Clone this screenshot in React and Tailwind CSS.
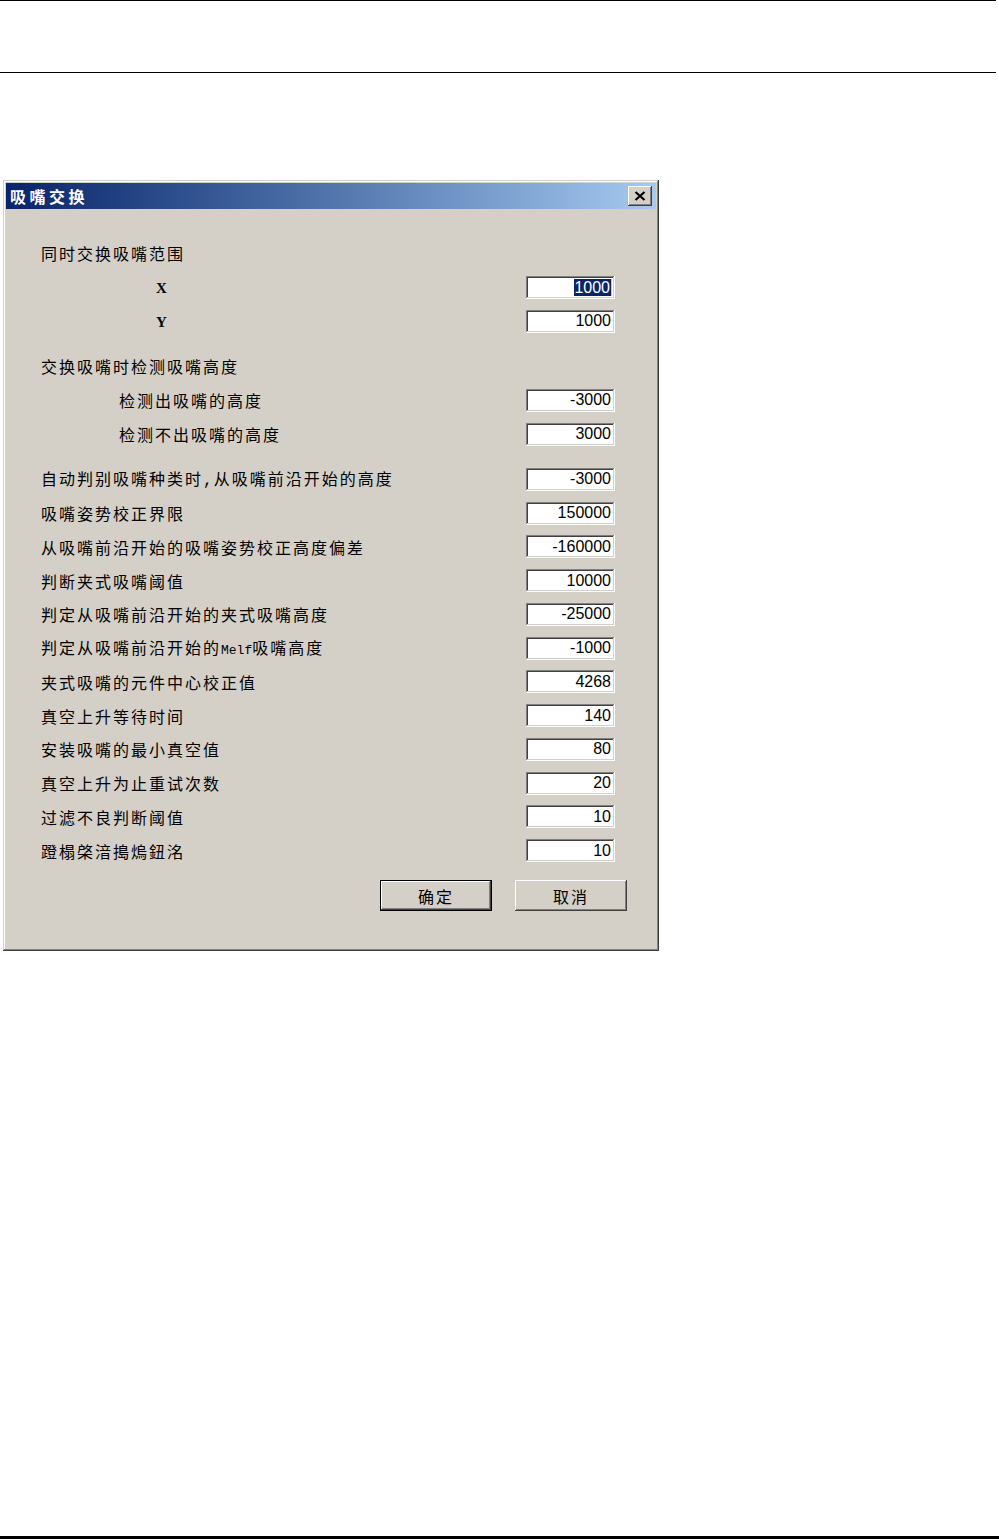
import React from 'react';

const raised = 'shadow-[inset_-1px_-1px_#404040,inset_1px_1px_#ffffff,inset_-2px_-2px_#808080,inset_2px_2px_#d4d0c8]';
const sunken = 'shadow-[inset_-1px_-1px_#ffffff,inset_1px_1px_#808080,inset_-2px_-2px_#d4d0c8,inset_2px_2px_#404040]';

const cjk = { fontFamily: '"Noto Sans CJK SC", "Noto Sans", sans-serif' };
const num = { fontFamily: '"Liberation Sans", Arial, sans-serif' };
const mono = { fontFamily: '"Liberation Mono", "DejaVu Sans Mono", monospace' };
const serif = { fontFamily: '"Liberation Serif", "DejaVu Serif", serif' };

function Field({ value, selected }) {
  return (
    <div className={`w-[89px] h-[23px] bg-white ${sunken} flex items-center justify-end pr-[4px] text-[16px] text-black`} style={num}>
      {selected ? (
        <span className="relative bg-[#0a246a] text-white leading-[17px] pr-[1px]">
          {value}
          <span className="absolute right-[-1px] top-0 w-[1px] h-[17px] bg-[#e8c860]" />
        </span>
      ) : (
        value
      )}
    </div>
  );
}

function Row({ label, value, indent = 'pl-0', h = 'h-[34px]', mt = '', selected }) {
  return (
    <div className={`flex items-center justify-between ${h} ${mt}`}>
      <div className={`${indent} text-[16px] tracking-[2px] text-black whitespace-nowrap`} style={cjk}>
        {label}
      </div>
      {value !== undefined && <Field value={value} selected={selected} />}
    </div>
  );
}

function CloseButton() {
  return (
    <div className={`w-[24px] h-[20px] bg-[#d4d0c8] ${raised} flex items-center justify-center`}>
      <svg width="12" height="10" viewBox="0 0 12 10">
        <path d="M1.5 1 L10.5 9 M10.5 1 L1.5 9" stroke="#000" strokeWidth="2.2" />
      </svg>
    </div>
  );
}

export default function App() {
  const tight = 'h-[33.75px]';
  return (
    <div className="min-h-[1539px] h-[1539px] bg-white flex flex-col">
      {/* page header rules */}
      <div className="w-[996px] h-[1px] bg-black" />
      <div className="w-[996px] h-[1px] bg-black mt-[71px]" />

      {/* dialog */}
      <div className={`ml-[3px] mt-[107px] w-[656px] h-[771px] bg-[#d4d0c8] p-[3px] shadow-[inset_-1px_-1px_#404040,inset_1px_1px_#d4d0c8,inset_-2px_-2px_#808080,inset_2px_2px_#ffffff]`}>
        <div className="h-[26px] bg-gradient-to-r from-[#0a246a] to-[#a6caf0] flex items-center justify-between pl-[4px] pr-[4px]">
          <span className="text-white font-bold text-[16px] tracking-[3.5px] leading-none" style={cjk}>吸嘴交换</span>
          <CloseButton />
        </div>

        <div className="pl-[35px] pr-[41px] pt-[27px]">
          <Row label="同时交换吸嘴范围" />
          <div className="flex items-center justify-between h-[34px]">
            <span className="pl-[115px] pt-[3px] text-[15px] font-bold text-black" style={serif}>X</span>
            <Field value="1000" selected />
          </div>
          <div className="flex items-center justify-between h-[34px]">
            <span className="pl-[115px] pt-[3px] text-[15px] font-bold text-black" style={serif}>Y</span>
            <Field value="1000" />
          </div>

          <Row label="交换吸嘴时检测吸嘴高度" mt="mt-[11px]" />
          <Row label="检测出吸嘴的高度" value="-3000" indent="pl-[78px]" />
          <Row label="检测不出吸嘴的高度" value="3000" indent="pl-[78px]" />

          <div className="mt-[11.5px]">
            <Row
              label={<>自动判别吸嘴种类时<span className="tracking-[1px]" style={mono}>,</span>从吸嘴前沿开始的高度</>}
              value="-3000"
              h={tight}
            />
            <Row label="吸嘴姿势校正界限" value="150000" h={tight} />
            <Row label="从吸嘴前沿开始的吸嘴姿势校正高度偏差" value="-160000" h={tight} />
            <Row label="判断夹式吸嘴阈值" value="10000" h={tight} />
            <Row label="判定从吸嘴前沿开始的夹式吸嘴高度" value="-25000" h={tight} />
            <Row
              label={<>判定从吸嘴前沿开始的<span className="text-[13px] tracking-[0px]" style={mono}>Melf</span>吸嘴高度</>}
              value="-1000"
              h={tight}
            />
            <Row label="夹式吸嘴的元件中心校正值" value="4268" h={tight} />
            <Row label="真空上升等待时间" value="140" h={tight} />
            <Row label="安装吸嘴的最小真空值" value="80" h={tight} />
            <Row label="真空上升为止重试次数" value="20" h={tight} />
            <Row label="过滤不良判断阈值" value="10" h={tight} />
            <Row label="蹬榻棨湆搗熓鈕洺" value="10" h={tight} />
          </div>
        </div>

        <div className="flex justify-end gap-[23px] pr-[29px] mt-[12.5px]">
          <button className="w-[112px] h-[31px] border border-black bg-[#d4d0c8] p-0">
            <div className={`w-full h-full ${raised} flex items-center justify-center text-[16px] tracking-[2px] text-black`} style={cjk}>
              确定
            </div>
          </button>
          <button className={`w-[112px] h-[31px] bg-[#d4d0c8] ${raised} flex items-center justify-center text-[16px] tracking-[2px] text-black`} style={cjk}>
            取消
          </button>
        </div>
      </div>

      <div className="mt-auto h-[3px] bg-black w-full" />
    </div>
  );
}
